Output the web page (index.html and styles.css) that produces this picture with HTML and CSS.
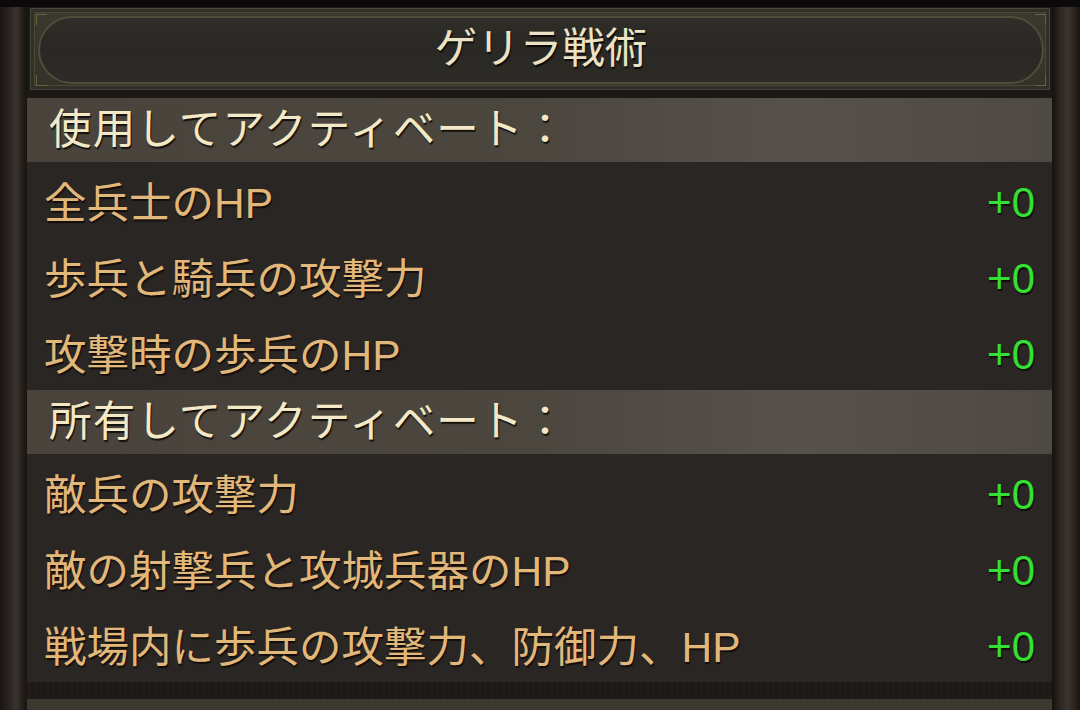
FILE: index.html
```html
<!DOCTYPE html>
<html lang="ja">
<head>
<meta charset="utf-8">
<link rel="stylesheet" href="styles.css">
</head>
<body>
<div class="topbar"></div>
<div class="frame">
  <div class="rail rail-left"></div>
  <div class="main">
    <div class="title-box">
      <div class="title-pill">
        <span class="corner c-tl"></span><span class="corner c-bl"></span>
        <span class="corner c-tr"></span><span class="corner c-br"></span>
        <h1 class="title">ゲリラ戦術</h1>
      </div>
    </div>
    <div class="panel">
      <div class="section-head">使用してアクティベート：</div>
      <div class="row"><span class="label">全兵士のHP</span><span class="value">+0</span></div>
      <div class="row"><span class="label">歩兵と騎兵の攻撃力</span><span class="value">+0</span></div>
      <div class="row"><span class="label">攻撃時の歩兵のHP</span><span class="value">+0</span></div>
      <div class="section-head">所有してアクティベート：</div>
      <div class="row"><span class="label">敵兵の攻撃力</span><span class="value">+0</span></div>
      <div class="row"><span class="label">敵の射撃兵と攻城兵器のHP</span><span class="value">+0</span></div>
      <div class="row"><span class="label">戦場内に歩兵の攻撃力、防御力、HP</span><span class="value">+0</span></div>
      <div class="bottom-dark"></div>
      <div class="bottom-light"></div>
    </div>
  </div>
  <div class="rail rail-right"></div>
</div>
</body>
</html>
```
FILE: styles.css
```css
html, body {
  margin: 0;
  padding: 0;
  width: 1080px;
  height: 710px;
  overflow: hidden;
  background: #1f1b18;
  font-family: "Liberation Sans", "Noto Sans CJK JP", sans-serif;
}
.topbar {
  height: 7px;
  background: #0b0909;
}
.frame {
  display: flex;
  height: 703px;
}
.rail {
  width: 27px;
  flex: none;
}
.rail-left {
  background: linear-gradient(90deg, #1a1614 0%, #2b2521 35%, #3a322b 60%, #231e1b 85%, #151210 100%);
}
.rail-right {
  width: 28px;
  background: linear-gradient(90deg, #141110 0%, #2a231f 25%, #3b332c 55%, #2a241f 80%, #191513 100%);
}
.main {
  flex: 1;
  display: flex;
  flex-direction: column;
  background: #1c1816;
}
.title-box {
  margin: 1px 2px 0 3px;
  height: 82px;
  box-sizing: border-box;
  padding: 7px 5px 5px 7px;
  background: linear-gradient(180deg, #3a3930, #33322a);
  border: 1px solid #47463a;
  box-shadow: inset 0 0 0 3px #302f28, inset 0 0 0 4px #4a4837;
}
.title-pill {
  position: relative;
  height: 100%;
  box-sizing: border-box;
  border-radius: 34px;
  border: 2px solid #4f4c37;
  background: linear-gradient(180deg, #2f2d28 0%, #2a2824 50%, #2d2b26 100%);
  display: flex;
  align-items: center;
  justify-content: center;
}
.corner {
  position: absolute;
  width: 10px;
  height: 10px;
  border-color: #66633f;
  border-style: solid;
  border-width: 0;
}
.c-tl { left: -4px; top: -4px; border-left-width: 1px; border-top-width: 1px; }
.c-bl { left: -4px; bottom: -4px; border-left-width: 1px; border-bottom-width: 1px; }
.c-tr { right: -4px; top: -4px; border-right-width: 1px; border-top-width: 1px; }
.c-br { right: -4px; bottom: -4px; border-right-width: 1px; border-bottom-width: 1px; }
.title {
  margin: 0;
  font-size: 42.5px;
  font-weight: 400;
  line-height: 1;
  color: #ece3c6;
  text-shadow: 1px 2px 1px #0d0b09;
  transform: translateY(-1px);
}
.panel {
  margin-top: 8px;
  display: flex;
  flex-direction: column;
  flex: 1;
  background: #2a2624;
}
.section-head {
  height: 64px;
  box-sizing: border-box;
  display: flex;
  align-items: center;
  padding: 0 0 0 22px;
  font-size: 42.5px;
  font-weight: 400;
  line-height: 1;
  letter-spacing: 1.2px;
  color: #f3e9c6;
  text-shadow: 1px 2px 1px #14110e;
  background: linear-gradient(90deg, #49433c 0%, #4b463e 50%, #56514a 75%, #4e4942 100%);
}
.row {
  height: 76px;
  box-sizing: border-box;
  display: flex;
  align-items: center;
  justify-content: space-between;
  padding: 5px 17px 0 17px;
  font-size: 42.5px;
  font-weight: 400;
  line-height: 1;
}
.label {
  padding-top: 4px;
  color: #e2b77a;
  text-shadow: 1px 2px 1px #120e0b;
}
.value {
  color: #34e032;
  font-size: 42px;
  font-weight: 400;
  text-shadow: 1px 2px 1px #0e0c0a;
}
.bottom-dark {
  height: 17px;
  background: repeating-linear-gradient(90deg, #1d1917 0px, #221d1a 3px, #1a1614 6px);
}
.bottom-light {
  flex: 1;
  background: #3b382f;
}
```
